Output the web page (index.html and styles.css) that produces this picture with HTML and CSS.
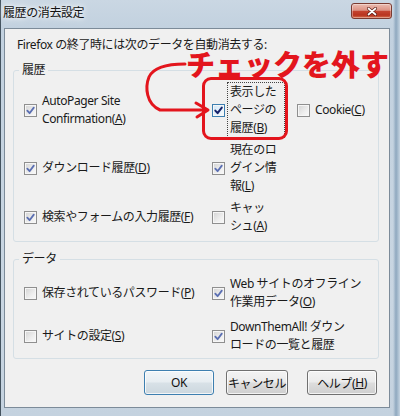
FILE: index.html
```html
<!DOCTYPE html>
<html lang="ja">
<head>
<meta charset="utf-8">
<title>履歴の消去設定</title>
<link rel="stylesheet" href="styles.css">
</head>
<body>
<div class="window">
  <div class="titlebar">
    <span class="title">履歴の消去設定</span>
    <span class="close"><svg viewBox="0 0 10 9" width="10" height="9"><path d="M1.5 1.5 L8.5 7.5 M8.5 1.5 L1.5 7.5" stroke="#5a1a12" stroke-width="3" stroke-linecap="round"/><path d="M1.5 1.5 L8.5 7.5 M8.5 1.5 L1.5 7.5" stroke="#ffffff" stroke-width="1.7" stroke-linecap="round"/></svg></span>
  </div>
  <div class="client">
    <p class="intro">Firefox の終了時には次のデータを自動消去する:</p>
    <fieldset class="group history">
      <legend>履歴</legend>
      <div class="grid grid-history">
        <div class="opt"><span class="cb on"><svg viewBox="0 0 11 11"><path d="M2.3 5.6 L4.6 8.2 L8.8 2.6"/></svg></span><span class="lbl">AutoPager Site<br>Confirmation(<u>A</u>)</span></div>
        <div class="opt"><span class="cb on hot"><svg viewBox="0 0 11 11"><path d="M2.3 5.6 L4.6 8.2 L8.8 2.6"/></svg></span><span class="lbl focus">表示した<br>ページの<br>履歴(<u>B</u>)</span></div>
        <div class="opt"><span class="cb"></span><span class="lbl">Cookie(<u>C</u>)</span></div>
        <div class="opt"><span class="cb on"><svg viewBox="0 0 11 11"><path d="M2.3 5.6 L4.6 8.2 L8.8 2.6"/></svg></span><span class="lbl">ダウンロード履歴(<u>D</u>)</span></div>
        <div class="opt"><span class="cb on"><svg viewBox="0 0 11 11"><path d="M2.3 5.6 L4.6 8.2 L8.8 2.6"/></svg></span><span class="lbl">現在のロ<br>グイン情<br>報(<u>L</u>)</span></div>
        <div class="opt"></div>
        <div class="opt"><span class="cb on"><svg viewBox="0 0 11 11"><path d="M2.3 5.6 L4.6 8.2 L8.8 2.6"/></svg></span><span class="lbl">検索やフォームの入力履歴(<u>F</u>)</span></div>
        <div class="opt"><span class="cb"></span><span class="lbl">キャッ<br>シュ(<u>A</u>)</span></div>
        <div class="opt"></div>
      </div>
    </fieldset>
    <fieldset class="group data">
      <legend>データ</legend>
      <div class="grid grid-data">
        <div class="opt"><span class="cb"></span><span class="lbl">保存されているパスワード(<u>P</u>)</span></div>
        <div class="opt wide"><span class="cb on"><svg viewBox="0 0 11 11"><path d="M2.3 5.6 L4.6 8.2 L8.8 2.6"/></svg></span><span class="lbl">Web サイトのオフライン<br>作業用データ(<u>O</u>)</span></div>
        <div class="opt"><span class="cb"></span><span class="lbl">サイトの設定(<u>S</u>)</span></div>
        <div class="opt wide"><span class="cb on"><svg viewBox="0 0 11 11"><path d="M2.3 5.6 L4.6 8.2 L8.8 2.6"/></svg></span><span class="lbl">DownThemAll! ダウン<br>ロードの一覧と履歴</span></div>
      </div>
    </fieldset>
    <div class="buttons">
      <button class="btn ok" type="button">OK</button>
      <button class="btn cancel" type="button">キャンセル</button>
      <button class="btn help" type="button">ヘルプ(<u>H</u>)</button>
    </div>
  </div>
  <div class="annot-text">チェックを外す</div>
  <div class="annot-box"></div>
  <svg class="annot-arrow" viewBox="0 0 80 70" width="80" height="70"><path d="M45 14 C 30 14, 14 16, 9 27 C 5 37, 6 54, 20 60 L 66 60" fill="none" stroke="#e3151d" stroke-width="3" stroke-linecap="round"/><path d="M56 53 L 68 60 L 57 67" fill="none" stroke="#e3151d" stroke-width="3" stroke-linecap="round" stroke-linejoin="round"/></svg>
</div>
</body>
</html>
```
FILE: styles.css
```css
* { box-sizing: border-box; }
html, body { margin: 0; padding: 0; }
body {
  width: 400px;
  height: 416px;
  overflow: hidden;
  font-family: "Noto Sans", "Noto Sans CJK JP", sans-serif;
  font-size: 12px;
  letter-spacing: -0.4px;
  color: #1a1a1a;
}
.window {
  position: relative;
  width: 400px;
  height: 416px;
  display: flex;
  flex-direction: column;
  border-left: 1px solid #44535f;
  background:
    linear-gradient(90deg, rgba(0,0,0,0) 392px, #8fa8bf 395px, #a9bed0 397px, #c6d4e1 399px),
    linear-gradient(180deg, #cad7e3 0, #c2d1df 28px, #c9d6e2 300px, #c4d2df 100%);
}
.titlebar {
  flex: none;
  height: 28px;
  display: flex;
  align-items: flex-start;
}
.title {
  padding: 5px 0 0 2px;
  line-height: 16px;
  color: #111;
  text-shadow: 0 0 4px #fff, 0 0 8px #fff;
}
.close {
  margin: 3px 8px 0 auto;
  width: 41px;
  height: 16px;
  border: 1px solid #7a3b31;
  border-radius: 3px;
  background: linear-gradient(180deg, #ebbcb1 0%, #dc9384 45%, #c4432f 52%, #b8341f 80%, #d8714f 100%);
  box-shadow: inset 0 0 0 1px rgba(255,255,255,0.35);
  display: flex;
  align-items: center;
  justify-content: center;
}
.close svg { display: block; }
.client {
  flex: none;
  height: 380px;
  margin: 0 10px 0 3px;
  border: 1px solid #7c8b99;
  background: #f0f0f0;
  display: flex;
  flex-direction: column;
}
.intro {
  margin: 8px 0 0 12px;
  line-height: 16px;
}
.group {
  margin: 8px 10px 0 8px;
  padding: 4px 0 6px 10px;
  border: 1px solid #d5dfe5;
  border-radius: 3px;
  min-width: 0;
}
.group legend {
  padding: 0 3px;
  margin-left: -5px;
  line-height: 18px;
}
.data {
  margin-top: 8px;
  padding-top: 7px;
  padding-bottom: 4px;
}
.grid {
  display: grid;
  grid-template-columns: 188px 85px 1fr;
  row-gap: 4px;
}
.grid-history { grid-template-rows: 54px 54px 36px; }
.grid-data {
  grid-template-columns: 188px 1fr;
  grid-template-rows: 36px 36px;
  row-gap: 7px;
}
.opt {
  display: flex;
  align-items: center;
  gap: 5px;
  line-height: 18px;
  white-space: nowrap;
}
.cb {
  flex: none;
  width: 13px;
  height: 13px;
  border: 1px solid #8f8f8f;
  background: linear-gradient(135deg, #d3d3d3 0%, #eeeeee 60%, #fafafa 100%);
  box-shadow: inset 0 0 0 1px #f6f6f6;
  display: flex;
  align-items: center;
  justify-content: center;
}
.cb svg {
  display: block;
  width: 11px;
  height: 11px;
  fill: none;
  stroke: #5b6fb2;
  stroke-width: 1.8;
  stroke-linecap: round;
  stroke-linejoin: round;
}
.cb.hot {
  border-color: #3c7fb1;
  background: linear-gradient(135deg, #cfe6f7 0%, #e9f4fc 60%, #f6fbfe 100%);
}
.cb.hot svg { stroke: #16226a; stroke-width: 2; }
.lbl u, .btn u { text-underline-offset: 1px; }
.focus {
  display: inline-block;
  width: 56px;
  margin-left: -2px;
  padding: 0 2px;
  outline: 1px dotted #444;
}
.buttons {
  display: flex;
  justify-content: flex-end;
  gap: 12px;
  margin: 11px 12px 0 0;
}
.btn {
  height: 25px;
  padding: 0;
  font: inherit;
  letter-spacing: inherit;
  color: #111;
  border: 1px solid #707070;
  border-radius: 3px;
  background: linear-gradient(180deg, #f3f3f3 0%, #ebebeb 48%, #dddddd 52%, #cfcfcf 100%);
  box-shadow: inset 0 0 0 1px rgba(255,255,255,0.75);
  display: flex;
  align-items: center;
  justify-content: center;
}
.ok {
  width: 70px;
  border-color: #3d7fb0;
  background: linear-gradient(180deg, #f1f5f8 0%, #e7edf1 48%, #d8e1e7 52%, #ccd7de 100%);
}
.cancel { width: 62px; }
.help { width: 70px; margin-left: 7px; }
.annot-text {
  position: absolute;
  left: 185px;
  top: 56px;
  font-size: 29px;
  line-height: 18px;
  letter-spacing: 0;
  font-weight: 900;
  color: #e3151d;
  white-space: nowrap;
}
.annot-box {
  position: absolute;
  left: 201px;
  top: 77px;
  width: 86px;
  height: 63px;
  border: 3px solid #e3151d;
  border-radius: 9px;
}
.annot-arrow {
  position: absolute;
  left: 139px;
  top: 50px;
}
```
